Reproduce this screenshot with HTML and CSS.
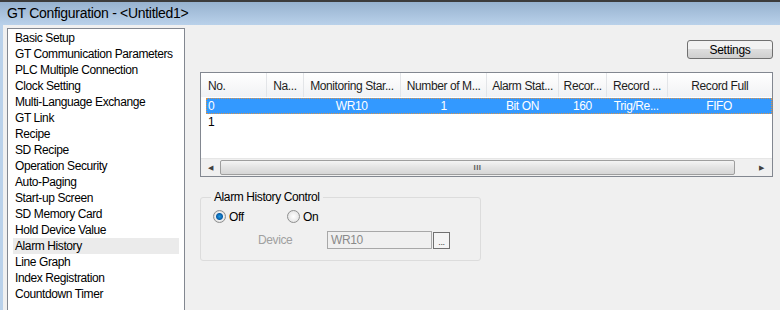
FILE: index.html
```html
<!DOCTYPE html>
<html lang="en">
<head>
    <meta charset="UTF-8">
    <title>GT Configuration</title>
    <link rel="stylesheet" href="styles.css">
</head>
<body>
    <div class="titlebar">GT Configuration - &lt;Untitled1&gt;</div>

    <div class="frame">
        <ul class="nav">
            <li>Basic Setup</li>
            <li>GT Communication Parameters</li>
            <li>PLC Multiple Connection</li>
            <li>Clock Setting</li>
            <li>Multi-Language Exchange</li>
            <li>GT Link</li>
            <li>Recipe</li>
            <li>SD Recipe</li>
            <li>Operation Security</li>
            <li>Auto-Paging</li>
            <li>Start-up Screen</li>
            <li>SD Memory Card</li>
            <li>Hold Device Value</li>
            <li class="active">Alarm History</li>
            <li>Line Graph</li>
            <li>Index Registration</li>
            <li>Countdown Timer</li>
        </ul>

        <div class="main">
            <div class="toolbar">
                <button class="btn">Settings</button>
            </div>

            <div class="list">
                <div class="row head">
                    <span class="c1 left">No.</span>
                    <span class="c2">Na...</span>
                    <span class="c3">Monitoring Star...</span>
                    <span class="c4">Number of M...</span>
                    <span class="c5">Alarm Stat...</span>
                    <span class="c6">Recor...</span>
                    <span class="c7">Record ...</span>
                    <span class="c8">Record Full</span>
                </div>
                <div class="rows">
                    <div class="row item selected">
                        <span class="c1 left">0</span>
                        <span class="c2"></span>
                        <span class="c3">WR10</span>
                        <span class="c4">1</span>
                        <span class="c5">Bit ON</span>
                        <span class="c6">160</span>
                        <span class="c7">Trig/Re...</span>
                        <span class="c8">FIFO</span>
                    </div>
                    <div class="row item">
                        <span class="c1 left">1</span>
                    </div>
                </div>
                <div class="hscroll">
                    <span class="arrow">&#9664;</span>
                    <span class="thumb"><span class="grip">III</span></span>
                    <span class="arrow right">&#9654;</span>
                </div>
            </div>

            <fieldset class="group">
                <legend>Alarm History Control</legend>
                <div class="radios">
                    <label class="radio"><span class="dot on"></span>Off</label>
                    <label class="radio"><span class="dot"></span>On</label>
                </div>
                <div class="device">
                    <span class="dev-label">Device</span>
                    <span class="dev-input">WR10</span>
                    <span class="dev-btn">...</span>
                </div>
            </fieldset>
        </div>
    </div>
</body>
</html>
```

FILE: styles.css
```css
body {
    margin: 0;
    height: 310px;
    background: #f0f0f0;
    font-family: "Liberation Sans", Arial, sans-serif;
    font-size: 12px;
    letter-spacing: -0.4px;
    color: #000;
    overflow: hidden;
}
.titlebar {
    height: 23px;
    border-top: 2px solid #3c3c3c;
    background: linear-gradient(#97b2cf, #b9d1ea);
    padding-left: 7px;
    font-size: 14px;
    line-height: 22px;
    letter-spacing: -0.3px;
}
.frame {
    display: flex;
    border-left: 3px solid #b9d1ea;
    height: 285px;
    overflow: hidden;
}
.nav {
    list-style: none;
    margin: 3px 0 0 4px;
    padding: 1px 5px;
    width: 166px;
    height: 300px;
    background: #fff;
    border: 1px solid #828790;
    flex-shrink: 0;
}
.nav li {
    height: 16px;
    line-height: 16px;
    padding-left: 2px;
    white-space: nowrap;
}
.nav li.active {
    background: #ebebeb;
}
.main {
    margin-left: 15px;
    width: 573px;
}
.toolbar {
    display: flex;
    justify-content: flex-end;
    padding-top: 15px;
    height: 32px;
}
.btn {
    width: 86px;
    height: 19px;
    padding: 0;
    font-family: inherit;
    font-size: 12px;
    letter-spacing: -0.3px;
    border: 1px solid #707070;
    border-radius: 3px;
    background: linear-gradient(#f2f2f2 50%, #dddddd 50%, #cfcfcf);
}
.list {
    border: 1px solid #828790;
    background: #fff;
    height: 103px;
    display: flex;
    flex-direction: column;
}
.row {
    display: flex;
    white-space: nowrap;
}
.row span {
    overflow: hidden;
    text-align: center;
}
.row .left {
    text-align: left;
    padding-left: 7px;
}
.head {
    height: 24px;
    line-height: 26px;
    background: linear-gradient(#ffffff, #f1f2f4);
}
.head span {
    border-right: 1px solid #e3e5e8;
    color: #1e1e1e;
}
.c1 { width: 66px; }
.c2 { width: 36px; }
.c3 { width: 98px; }
.c4 { width: 86px; }
.c5 { width: 72px; }
.c6 { width: 48px; }
.c7 { width: 60px; }
.c8 { width: 106px; }
.head .c1 { width: 59px; }
.head .c8 { border-right: none; }
.rows {
    flex: 1;
    padding: 1px 0 0 5px;
}
.rows .c1 { width: 61px; }
.rows .left { padding-left: 2px; width: 59px; }
.item {
    height: 16px;
    line-height: 16px;
}
.selected {
    background: #3399ff;
    color: #fff;
    outline: 1px dotted #d9944b;
    outline-offset: -1px;
}
.hscroll {
    height: 17px;
    display: flex;
    background: #f0f0f0;
    border-top: 1px solid #e6e6e6;
}
.arrow {
    width: 19px;
    font-size: 7px;
    line-height: 17px;
    text-align: center;
    color: #404040;
}
.arrow.right {
    margin-left: auto;
    width: 35px;
    text-align: right;
    padding-right: 8px;
    box-sizing: border-box;
}
.thumb {
    width: 515px;
    height: 15px;
    margin-top: 1px;
    border: 1px solid #9e9e9e;
    border-radius: 2px;
    box-sizing: border-box;
    background: linear-gradient(#f4f4f4, #e3e3e3 50%, #d6d6d6);
    text-align: center;
    font-size: 8px;
    line-height: 13px;
    font-weight: bold;
    letter-spacing: 0.5px;
    color: #606060;
}
.group {
    margin: 13px 0 0 0;
    width: 267px;
    border: 1px solid #dcdcdc;
    border-radius: 3px;
    padding: 0 0 11px 12px;
}
.group legend {
    padding: 0 3px;
    margin-left: -2px;
    color: #000;
}
.radios {
    display: flex;
    height: 17px;
    align-items: center;
    margin-top: 4px;
}
.radio {
    display: flex;
    align-items: center;
    gap: 3px;
    width: 74px;
}
.dot {
    width: 11px;
    height: 11px;
    border-radius: 50%;
    border: 1px solid #8e8f8f;
    background: radial-gradient(#ffffff, #dcdcdc);
}
.dot.on {
    background: radial-gradient(circle, #1f9be3 0, #0a5ea8 3px, #f2f2f2 4px, #d9d9d9 6px);
}
.device {
    display: flex;
    align-items: center;
    margin-top: 6px;
}
.dev-label {
    margin-left: 45px;
    width: 69px;
    color: #a0a0a0;
}
.dev-input {
    width: 100px;
    height: 16px;
    line-height: 16px;
    border: 1px solid #a8a8a8;
    background: #f0f0f0;
    color: #8a8a8a;
    padding-left: 3px;
}
.dev-btn {
    width: 15px;
    height: 15px;
    margin-left: 1px;
    border: 1px solid #707070;
    background: #f4f4f4;
    font-size: 9px;
    line-height: 18px;
    text-align: center;
    color: #404040;
}
```
